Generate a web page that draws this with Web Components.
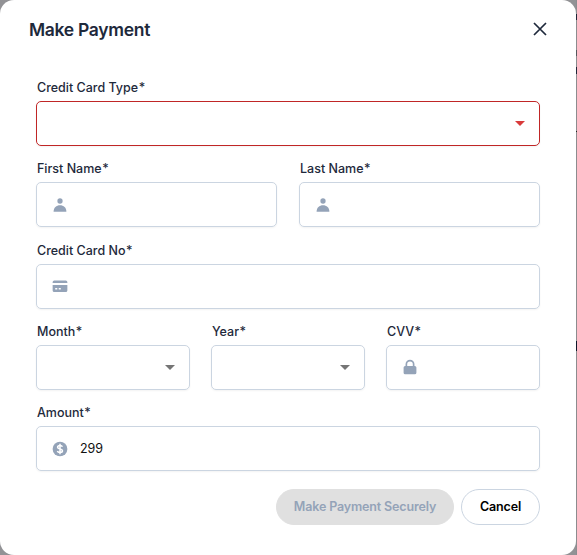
<!DOCTYPE html>
<html lang="en">
<head>
<meta charset="utf-8">
<title>Make Payment</title>
<style>
    body {
        margin: 0;
        height: 555px;
        overflow: hidden;
        background:
            linear-gradient(#8c8c8f 14px, #1e2638 14px 20px, #8c8c8f 20px 50px, #55565c 50px 56px, #8c8c8f 56px 67px, #1e2638 67px 74px, #8c8c8f 74px 131px, #222 131px 132px, #8c8c8f 132px 341px, #0f172a 341px 351px, #8c8c8f 351px) right / 1px 100% no-repeat,
            #929295;
        font-family: Inter, "Liberation Sans", sans-serif;
        color: #1e293b;
    }
</style>
</head>
<body>
<payment-dialog heading="Make Payment">
    <form-row>
        <form-field label="Credit Card Type" kind="select" invalid></form-field>
    </form-row>
    <form-row>
        <form-field label="First Name" icon="user"></form-field>
        <form-field label="Last Name" icon="user"></form-field>
    </form-row>
    <form-row>
        <form-field label="Credit Card No" icon="card"></form-field>
    </form-row>
    <form-row style="--row-gap: 21px">
        <form-field label="Month" kind="select"></form-field>
        <form-field label="Year" kind="select"></form-field>
        <form-field label="CVV" icon="lock"></form-field>
    </form-row>
    <form-row>
        <form-field label="Amount" icon="dollar">299</form-field>
    </form-row>
    <pill-button slot="actions" disabled>Make Payment Securely</pill-button>
    <pill-button slot="actions">Cancel</pill-button>
</payment-dialog>

<script>
const ICONS = {
    user: `<svg viewBox="0 0 20 20"><circle cx="10" cy="5" r="3.3"/><path d="M2 18.4C2 13.4 5.5 10.4 10 10.4s8 3 8 8z"/></svg>`,
    card: `<svg viewBox="0 0 20 20"><path d="M.8 6.4V5a2 2 0 0 1 2-2h14.4a2 2 0 0 1 2 2v1.4z"/><path fill-rule="evenodd" d="M.8 8.8h18.4v6.7a2 2 0 0 1-2 2H2.8a2 2 0 0 1-2-2zM4 12.6v1.8h2.6v-1.8zM8.4 12.6v1.8H11v-1.8z"/></svg>`,
    lock: `<svg viewBox="0 0 20 20"><path fill-rule="evenodd" d="M4.4 8.6V6.6a5.6 5.6 0 0 1 11.2 0v2h.4a2 2 0 0 1 2 2v6.6a2 2 0 0 1-2 2H4a2 2 0 0 1-2-2v-6.6a2 2 0 0 1 2-2zM13.5 8.6v-2a3.5 3.5 0 0 0-7 0v2z"/></svg>`,
    dollar: `<svg viewBox="0 0 20 20"><circle cx="10" cy="10" r="9.2"/><path d="M13 7.3C12.6 6.1 11.4 5.5 10 5.5c-1.8 0-3 .9-3 2.2 0 3.2 6.1 1.4 6.1 4.6 0 1.4-1.3 2.2-3.1 2.2-1.7 0-2.9-.7-3.3-2M10 3.5v13" fill="none" stroke="#fff" stroke-width="1.9"/></svg>`
};

class PaymentDialog extends HTMLElement {
    constructor() {
        super();
        this.attachShadow({mode: 'open'});
        this.shadowRoot.innerHTML = `
            <style>
                :host {
                    display: block;
                    box-sizing: border-box;
                    width: 576px;
                    height: 555px;
                    padding: 17px 36px 0;
                    border-radius: 14px;
                    background: #fff;
                }
                header {
                    display: flex;
                    align-items: center;
                    justify-content: space-between;
                    height: 24px;
                    margin: 0 -7px;
                }
                h1 {
                    margin: 0;
                    padding-top: 2px;
                    font-size: 17.5px;
                    font-weight: 600;
                    line-height: 24px;
                    letter-spacing: -0.3px;
                }
                header svg {
                    display: block;
                    width: 14px;
                    height: 14px;
                }
                main {
                    display: grid;
                    gap: 14.25px;
                    padding-top: 38px;
                }
                footer {
                    display: flex;
                    justify-content: flex-end;
                    gap: 7px;
                    padding-top: 18px;
                }
            </style>
            <header>
                <h1></h1>
                <svg viewBox="0 0 14 14"><path d="M1 1l12 12M13 1L1 13" fill="none" stroke="#1e293b" stroke-width="1.7"/></svg>
            </header>
            <main><slot></slot></main>
            <footer><slot name="actions"></slot></footer>
        `;
    }

    connectedCallback() {
        this.shadowRoot.querySelector('h1').textContent = this.getAttribute('heading');
    }
}

class FormRow extends HTMLElement {
    constructor() {
        super();
        this.attachShadow({mode: 'open'});
        this.shadowRoot.innerHTML = `
            <style>
                :host {
                    display: flex;
                    gap: var(--row-gap, 22px);
                }
                ::slotted(*) {
                    flex: 1 1 0;
                }
            </style>
            <slot></slot>
        `;
    }
}

class FormField extends HTMLElement {
    constructor() {
        super();
        this.attachShadow({mode: 'open'});
        this.shadowRoot.innerHTML = `
            <style>
                :host {
                    display: block;
                    --border: #cbd5e1;
                    --arrow: #757575;
                }
                :host([invalid]) {
                    --border: #c02626;
                    --arrow: #d93b3b;
                }
                .label {
                    height: 17px;
                    padding: 0 1px 5px;
                    font-size: 12.5px;
                    font-weight: 500;
                    line-height: 17px;
                    white-space: nowrap;
                }
                .label i {
                    margin-left: 0.5px;
                    font-style: normal;
                }
                .box {
                    display: flex;
                    align-items: center;
                    gap: 12px;
                    box-sizing: border-box;
                    height: 45px;
                    padding: 0 14px 0 15px;
                    border: 1px solid var(--border);
                    border-radius: 5px;
                    box-shadow: 0 1px 2px rgba(0, 0, 0, .05);
                    color: #111;
                    font-size: 12.5px;
                }
                svg {
                    display: block;
                    width: 16px;
                    height: 16px;
                    fill: #94a3b8;
                }
                .arrow {
                    margin-left: auto;
                    border: 5px solid transparent;
                    border-top-color: var(--arrow);
                    border-bottom: 0;
                }
            </style>
            <div class="label"><span></span><i>*</i></div>
            <div class="box"></div>
        `;
    }

    connectedCallback() {
        const icon = ICONS[this.getAttribute('icon')] || '';
        const arrow = this.getAttribute('kind') === 'select' ? '<span class="arrow"></span>' : '';
        this.shadowRoot.querySelector('.label span').textContent = this.getAttribute('label');
        this.shadowRoot.querySelector('.box').innerHTML = `${icon}<span><slot></slot></span>${arrow}`;
    }
}

class PillButton extends HTMLElement {
    constructor() {
        super();
        this.attachShadow({mode: 'open'});
        this.shadowRoot.innerHTML = `
            <style>
                :host {
                    display: flex;
                    justify-content: center;
                    box-sizing: border-box;
                    width: 79px;
                    height: 36px;
                    border: 1px solid #cbd5e1;
                    border-radius: 18px;
                    color: #000;
                    font-size: 12.5px;
                    font-weight: 600;
                    line-height: 34px;
                    letter-spacing: -0.15px;
                    white-space: nowrap;
                }
                :host([disabled]) {
                    width: 178px;
                    border-color: #e0e0e0;
                    background: #e0e0e0;
                    color: #94a3b8;
                }
            </style>
            <slot></slot>
        `;
    }
}

window.customElements.define('payment-dialog', PaymentDialog);
window.customElements.define('form-row', FormRow);
window.customElements.define('form-field', FormField);
window.customElements.define('pill-button', PillButton);
</script>
</body>
</html>
